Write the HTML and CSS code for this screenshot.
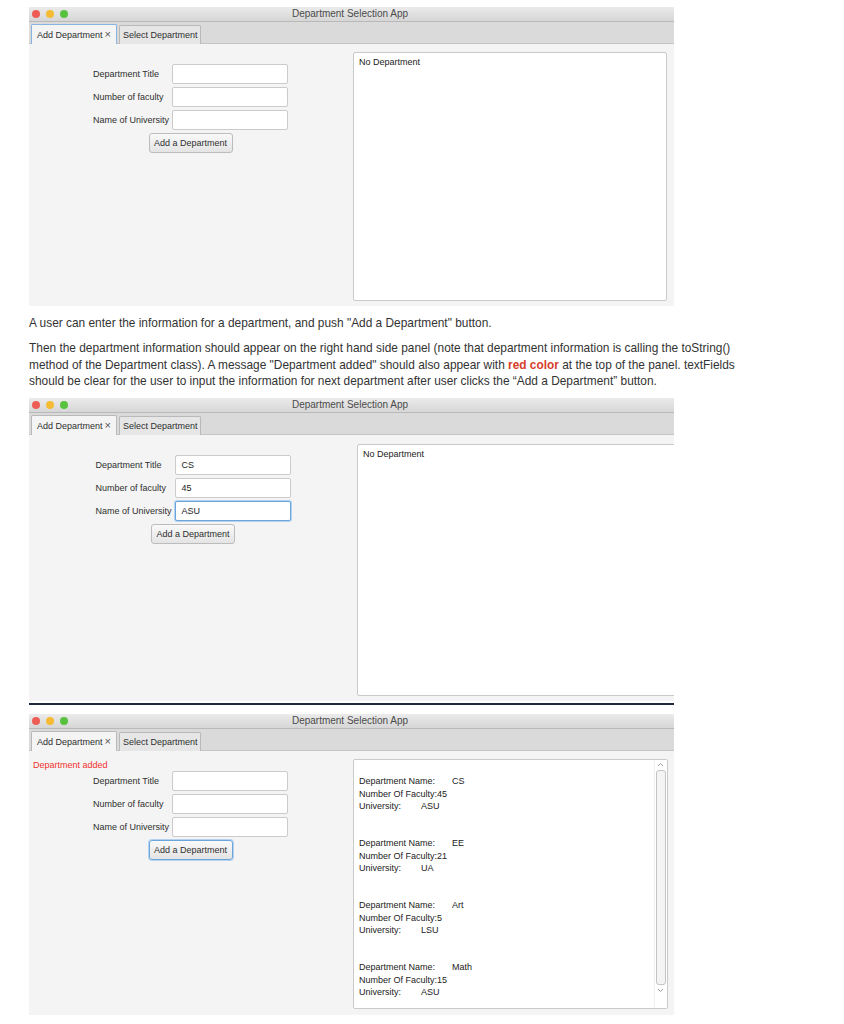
FILE: index.html
```html
<!DOCTYPE html>
<html lang="en">
<head>
<meta charset="utf-8">
<title>Department Selection App</title>
<link rel="stylesheet" href="styles.css">
</head>
<body>
<div class="page">

  <section class="window w1">
    <div class="titlebar">
      <div class="lights"><span class="light red"></span><span class="light yellow"></span><span class="light green"></span></div>
      <div class="title">Department Selection App</div>
      <div></div>
    </div>
    <div class="tabbar">
      <div class="tab active focused">Add Department<span class="close">×</span></div>
      <div class="tab">Select Department</div>
    </div>
    <div class="content">
      <div class="formcol">
        <div class="grid">
          <span class="label">Department Title</span><div class="field"></div>
          <span class="label">Number of faculty</span><div class="field"></div>
          <span class="label">Name of University</span><div class="field"></div>
        </div>
        <div class="btn">Add a Department</div>
      </div>
      <div class="panel"><div class="ptext">No Department</div></div>
    </div>
  </section>

  <p class="para p1">A user can enter the information for a department, and push "Add a Department" button.</p>
  <p class="para p2">Then the department information should appear on the right hand side panel (note that department information is calling the toString()<br>method of the Department class). A message "Department added" should also appear with <b class="red">red color</b> at the top of the panel. textFields<br>should be clear for the user to input the information for next department after user clicks the “Add a Department” button.</p>

  <section class="window w2">
    <div class="titlebar">
      <div class="lights"><span class="light red"></span><span class="light yellow"></span><span class="light green"></span></div>
      <div class="title">Department Selection App</div>
      <div></div>
    </div>
    <div class="tabbar">
      <div class="tab active">Add Department<span class="close">×</span></div>
      <div class="tab">Select Department</div>
    </div>
    <div class="content">
      <div class="formcol">
        <div class="grid">
          <span class="label">Department Title</span><div class="field">CS</div>
          <span class="label">Number of faculty</span><div class="field">45</div>
          <span class="label">Name of University</span><div class="field focus">ASU</div>
        </div>
        <div class="btn">Add a Department</div>
      </div>
      <div class="panel open"><div class="ptext">No Department</div></div>
    </div>
  </section>
  <div class="divider"></div>

  <section class="window w3">
    <div class="titlebar">
      <div class="lights"><span class="light red"></span><span class="light yellow"></span><span class="light green"></span></div>
      <div class="title">Department Selection App</div>
      <div></div>
    </div>
    <div class="tabbar">
      <div class="tab active">Add Department<span class="close">×</span></div>
      <div class="tab">Select Department</div>
    </div>
    <div class="content">
      <div class="formcol">
        <div class="msg">Department added</div>
        <div class="grid">
          <span class="label">Department Title</span><div class="field"></div>
          <span class="label">Number of faculty</span><div class="field"></div>
          <span class="label">Name of University</span><div class="field"></div>
        </div>
        <div class="btn focus">Add a Department</div>
      </div>
      <div class="panel scrolled">
        <div class="records">
          <div class="rec">
            <div><span class="k1">Department Name:</span>CS</div>
            <div>Number Of Faculty:45</div>
            <div><span class="k2">University:</span>ASU</div>
          </div>
          <div class="rec">
            <div><span class="k1">Department Name:</span>EE</div>
            <div>Number Of Faculty:21</div>
            <div><span class="k2">University:</span>UA</div>
          </div>
          <div class="rec">
            <div><span class="k1">Department Name:</span>Art</div>
            <div>Number Of Faculty:5</div>
            <div><span class="k2">University:</span>LSU</div>
          </div>
          <div class="rec">
            <div><span class="k1">Department Name:</span>Math</div>
            <div>Number Of Faculty:15</div>
            <div><span class="k2">University:</span>ASU</div>
          </div>
        </div>
        <div class="scrollbar">
          <svg class="arrow" width="7" height="5" viewBox="0 0 7 5"><polyline points="1,4 3.5,1.5 6,4" fill="none" stroke="#9a9a9a" stroke-width="1"/></svg>
          <div class="thumb"></div>
          <svg class="arrow" width="7" height="5" viewBox="0 0 7 5"><polyline points="1,1 3.5,3.5 6,1" fill="none" stroke="#9a9a9a" stroke-width="1"/></svg>
        </div>
      </div>
    </div>
  </section>

</div>
</body>
</html>
```

FILE: styles.css
```css
* { box-sizing: border-box; }
body {
  margin: 0;
  background: #ffffff;
  font-family: "Liberation Sans", Arial, sans-serif;
  color: #333333;
}
.page {
  padding: 7px 0 0 29px;
  width: 844px;
}
.window {
  width: 645px;
  background: #f4f4f4;
  overflow: hidden;
}
.titlebar {
  height: 15px;
  display: grid;
  grid-template-columns: 1fr auto 1fr;
  align-items: center;
  background: linear-gradient(#ebebeb, #d6d6d6);
  border-bottom: 1px solid #b9b9b9;
}
.lights {
  display: flex;
  gap: 6px;
  padding-left: 3px;
}
.light {
  width: 8px;
  height: 8px;
  border-radius: 50%;
}
.light.red { background: #ee5d55; }
.light.yellow { background: #f6bb34; }
.light.green { background: #58c23f; }
.title {
  font-size: 10px;
  color: #4b4b4b;
  line-height: 14px;
  margin-right: 3px;
}
.tabbar {
  height: 22px;
  display: flex;
  align-items: flex-end;
  gap: 2px;
  padding-left: 2px;
  background: #dadada;
  border-bottom: 1px solid #c5c5c5;
}
.tab {
  height: 19px;
  padding: 0 2px 0 3px;
  display: flex;
  align-items: center;
  font-size: 9px;
  color: #2e2e2e;
  background: #e6e6e6;
  border: 1px solid #b9b9b9;
  border-bottom: none;
  border-radius: 2px 2px 0 0;
  margin-bottom: -1px;
}
.tab.active {
  background: #f4f4f4;
  height: 20px;
  padding: 0 5px 0 5px;
}
.tab.focused {
  border-color: #86b4de;
}
.close {
  font-size: 11px;
  color: #555555;
  margin-left: 2px;
  line-height: 1;
}
.content {
  display: flex;
  align-items: stretch;
}
.w1 .content { height: 262px; }
.w2 .content { height: 266px; }
.w3 .content { height: 264px; }
.formcol {
  width: 323px;
  flex: none;
  display: flex;
  flex-direction: column;
  align-items: center;
  padding-top: 20px;
}
.w2 .formcol { width: 328px; }
.w3 .formcol { padding-top: 9px; }
.msg {
  align-self: flex-start;
  margin-left: 4px;
  height: 11px;
  line-height: 11px;
  font-size: 9px;
  color: #f0312c;
}
.grid {
  display: grid;
  grid-template-columns: auto 116px;
  column-gap: 3px;
  row-gap: 3px;
  align-items: center;
}
.label {
  font-size: 9px;
  color: #2f2f2f;
}
.field {
  height: 20px;
  background: #ffffff;
  border: 1px solid #cbcbcb;
  border-radius: 2px;
  font-size: 9px;
  color: #222222;
  display: flex;
  align-items: center;
  padding: 0 6px;
}
.field.focus {
  border-color: #6aa5dc;
  box-shadow: 0 0 0 1px #b5d3f0;
}
.btn {
  margin-top: 3px;
  width: 84px;
  height: 20px;
  display: flex;
  align-items: center;
  justify-content: center;
  font-size: 9px;
  color: #2f2f2f;
  background: linear-gradient(#f9f9f9, #e4e4e4);
  border: 1px solid #bcbcbc;
  border-radius: 3px;
}
.btn.focus {
  border-color: #6aa5dc;
  box-shadow: 0 0 0 1px #b5d3f0;
}
.panel {
  flex: 1;
  background: #ffffff;
  border: 1px solid #cacaca;
  border-radius: 2px;
  margin: 8px 7px 5px 1px;
  font-size: 9px;
  color: #222222;
  display: flex;
}
.w2 .panel { margin: 9px -10px 5px 0; }
.w3 .panel { margin: 8px 6px 6px 1px; }
.ptext {
  padding: 4px 5px;
  line-height: 11px;
}
.records {
  flex: 1;
  padding: 3px 5px 0 5px;
  line-height: 12.4px;
}
.rec { margin-top: 24.8px; }
.rec:first-child { margin-top: 12.4px; }
.k1 { display: inline-block; width: 93px; }
.k2 { display: inline-block; width: 62px; }
.scrollbar {
  width: 12px;
  flex: none;
  display: flex;
  flex-direction: column;
  align-items: center;
  padding: 2px 0 2px 0;
  gap: 3px;
  border-left: 1px solid #f0f0f0;
  margin-right: 1px;
}
.arrow { flex: none; }
.thumb {
  width: 10px;
  height: 215px;
  background: #f4f4f4;
  border: 1px solid #c4c4c4;
  border-radius: 3px;
}
.para {
  margin: 0;
  font-size: 11.9px;
  line-height: 16.5px;
  color: #333333;
}
.p1 { margin-top: 9px; }
.p2 { margin-top: 8.5px; }
.red { color: #d63e2a; }
.w2 { margin-top: 8.5px; }
.divider {
  width: 645px;
  height: 2px;
  margin-top: 2px;
  background: #1e2b3c;
}
.w3 { margin-top: 9px; }
```
